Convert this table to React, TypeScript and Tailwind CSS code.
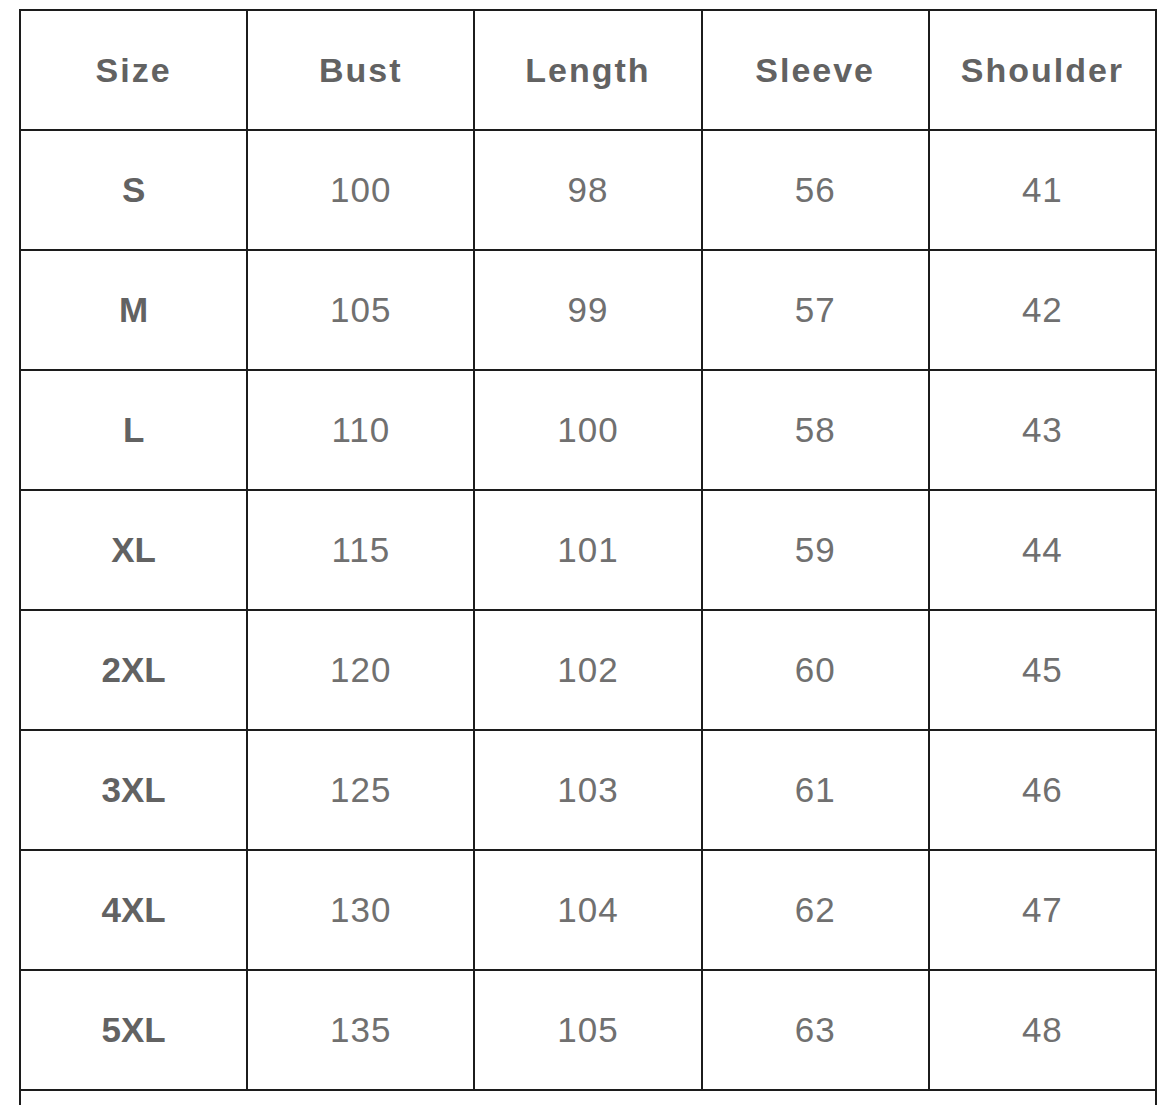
const headers = ['Size', 'Bust', 'Length', 'Sleeve', 'Shoulder'];

const rows = [
  ['S', '100', '98', '56', '41'],
  ['M', '105', '99', '57', '42'],
  ['L', '110', '100', '58', '43'],
  ['XL', '115', '101', '59', '44'],
  ['2XL', '120', '102', '60', '45'],
  ['3XL', '125', '103', '61', '46'],
  ['4XL', '130', '104', '62', '47'],
  ['5XL', '135', '105', '63', '48'],
];

export default function App() {
  return (
    <div className="bg-white w-[1170px] h-[1105px] overflow-hidden pt-[9px] pl-[19px] font-['Liberation_Sans',Arial,sans-serif]">
      <table className="border-collapse table-fixed w-[1138px] text-[#6a6a6a]">
        <thead>
          <tr>
            {headers.map((h) => (
              <th key={h} className="border-2 border-[#1c1c1c] h-[120px] text-[34px] font-bold tracking-[2px] text-center text-[#626262]">
                {h}
              </th>
            ))}
          </tr>
        </thead>
        <tbody>
          {rows.map((r) => (
            <tr key={r[0]}>
              {r.map((v, i) => (
                <td
                  key={i}
                  className={`border-2 border-[#1c1c1c] h-[120px] text-[35px] text-center ${i === 0 ? 'font-bold text-[#626262]' : 'tracking-[1px] text-[#707070]'}`}
                >
                  {v}
                </td>
              ))}
            </tr>
          ))}
          <tr>
            <td colSpan={5} className="border-2 border-[#1c1c1c] h-[120px]" />
          </tr>
        </tbody>
      </table>
    </div>
  );
}
